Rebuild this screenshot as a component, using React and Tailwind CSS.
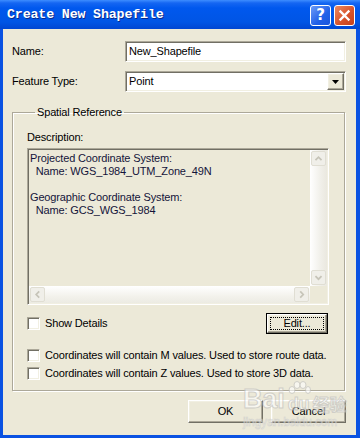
const raised =
  "border border-t-white border-l-white border-r-[#716F64] border-b-[#716F64] shadow-[inset_-1px_-1px_0_#ACA899,inset_1px_1px_0_#F1EFE2]";
const sunken =
  "border border-t-[#ACA899] border-l-[#ACA899] border-r-white border-b-white shadow-[inset_1px_1px_0_#716F64,inset_-1px_-1px_0_#F1EFE2]";

const Chevron = ({ dir }) => {
  const pts = {
    up: "4,9.5 7.5,6 11,9.5",
    down: "4,6 7.5,9.5 11,6",
    left: "9.5,4 6,7.5 9.5,11",
    right: "6,4 9.5,7.5 6,11",
  }[dir];
  return (
    <svg width="15" height="15" viewBox="0 0 15 15">
      <polyline points={pts} fill="none" stroke="#C6C4B8" strokeWidth="2" />
    </svg>
  );
};

const ScrollButton = ({ dir, className = "" }) => (
  <div className={`p-[1px] ${className}`}>
    <div className="w-[15px] h-[15px] rounded-[2px] border border-[#E0DED3] bg-[#F0EFE9] flex items-center justify-center">
      <Chevron dir={dir} />
    </div>
  </div>
);

const Checkbox = () => <div className={`w-[13px] h-[13px] shrink-0 bg-white ${sunken}`} />;

const CheckRow = ({ label, className = "" }) => (
  <div className={`flex items-center h-[13px] gap-[5px] ${className}`}>
    <Checkbox />
    <span className="leading-[13px]">{label}</span>
  </div>
);

const TitleBar = () => (
  <div className="h-[29px] flex pl-[7px] pr-[5px] bg-[linear-gradient(to_bottom,#3D8DFF_0px,#1566F2_3px,#0058EE_8px,#0055E5_22px,#0046D2_29px)]">
    <span className="flex-1 pt-[7px] font-['Liberation_Mono',monospace] font-bold text-[13.3px] leading-[15px] text-white [text-shadow:1px_1px_0_#0A2A8A]">
      Create New Shapefile
    </span>
    <div className="mt-[5px] w-[21px] h-[21px] rounded-[3px] border border-white bg-[linear-gradient(135deg,#6C9CF7,#2160E8_60%,#1A56DC)] flex items-center justify-center">
      <span className="font-['DejaVu_Sans',sans-serif] font-bold text-[15px] leading-none text-white">?</span>
    </div>
    <div className="ml-[3px] mt-[5px] w-[21px] h-[21px] rounded-[3px] border border-white bg-[linear-gradient(135deg,#EC8A62,#D8542C_55%,#C4401C)] flex items-center justify-center">
      <svg width="13" height="13" viewBox="0 0 13 13">
        <path d="M2.5 2.5 L10.5 10.5 M10.5 2.5 L2.5 10.5" stroke="white" strokeWidth="2.4" strokeLinecap="square" />
      </svg>
    </div>
  </div>
);

const Watermark = () => (
  <div className="absolute left-[243px] top-[381px] pointer-events-none select-none opacity-60">
    <div className="flex items-end text-white [-webkit-text-stroke:1px_#BDBDBD]">
      <span className="font-['Liberation_Sans',sans-serif] font-bold text-[27px] leading-none">Bai</span>
      <div className="flex flex-col items-center ml-[2px]">
        <svg width="24" height="14" viewBox="0 0 24 14">
          <g fill="white" stroke="#BDBDBD" strokeWidth="1">
            <ellipse cx="5" cy="9" rx="3" ry="3.5" />
            <ellipse cx="10" cy="4" rx="3" ry="3.5" />
            <ellipse cx="16" cy="4" rx="3" ry="3.5" />
            <ellipse cx="21" cy="9" rx="2.5" ry="3.5" />
          </g>
        </svg>
        <span className="font-['Liberation_Sans',sans-serif] font-bold text-[18px] leading-none">du</span>
      </div>
      <span className="ml-[2px] font-['Noto_Sans_CJK_SC',sans-serif] font-bold text-[17px] leading-none mb-[1px]">经验</span>
    </div>
    <div className="mt-[3px] font-['Liberation_Sans',sans-serif] text-[12px] leading-none text-white [-webkit-text-stroke:0.6px_#C4C4C4]">
      jingyan.baidu.com
    </div>
  </div>
);

export default function App() {
  return (
    <div className="relative w-[360px] h-[438px] flex flex-col bg-[#0A52E2] font-['Liberation_Sans',Arial,sans-serif] text-[11px] tracking-[-0.15px] text-black">
      <TitleBar />
      <div className="flex-1 flex flex-col ml-[3px] mr-[4px] mb-[3px] bg-[#ECE9D8] pl-[9px] pt-[12px]">
        <div className="flex items-center h-[21px]">
          <span className="w-[113px]">Name:</span>
          <div className={`w-[221px] h-[21px] bg-white flex items-center pl-[3px] ${sunken}`}>New_Shapefile</div>
        </div>
        <div className="flex items-center h-[21px] mt-[9px]">
          <span className="w-[113px]">Feature Type:</span>
          <div className={`w-[221px] h-[21px] bg-white flex items-center p-[1px] ${sunken}`}>
            <span className="flex-1 pl-[2px]">Point</span>
            <div className={`w-[17px] h-[17px] flex items-center justify-center bg-[#ECE9D8] ${raised}`}>
              <svg width="7" height="4" viewBox="0 0 7 4">
                <path d="M0 0 H7 L3.5 4 Z" fill="black" />
              </svg>
            </div>
          </div>
        </div>

        <fieldset className="mt-[14px] w-[333px] pl-[10px] pb-[10px] border border-[#ACA899] shadow-[inset_1px_1px_0_#fff,1px_1px_0_#fff]">
          <legend className="ml-[12px] px-[2px] h-[13px] leading-[13px]">Spatial Reference</legend>
          <div className="ml-[4px] w-[302px] flex flex-col">
            <div className="mt-[12px] h-[13px] leading-[13px]">Description:</div>
            <div className={`mt-[4px] h-[157px] grid grid-cols-[1fr_17px] grid-rows-[1fr_17px] bg-[#ECE9D8] ${sunken} p-[1px]`}>
              <div className="pl-[1px] pt-[2px] leading-[13px] whitespace-pre text-[#14143A] overflow-hidden">
                <div>Projected Coordinate System:</div>
                <div>{"  Name: WGS_1984_UTM_Zone_49N"}</div>
                <div className="h-[13px]" />
                <div>Geographic Coordinate System:</div>
                <div>{"  Name: GCS_WGS_1984"}</div>
              </div>
              <div className="flex flex-col bg-[linear-gradient(to_right,#FFFFFF,#F1F0EA_60%,#EAE8DF)]">
                <ScrollButton dir="up" />
                <div className="flex-1" />
                <ScrollButton dir="down" />
              </div>
              <div className="flex bg-[linear-gradient(to_bottom,#FFFFFF,#F3F2EC_60%,#ECEBE3)]">
                <ScrollButton dir="left" />
                <div className="flex-1" />
                <ScrollButton dir="right" />
              </div>
              <div className="bg-[#ECE9D8]" />
            </div>

            <div className="mt-[8px] h-[20px] flex items-center">
              <CheckRow label="Show Details" className="flex-1" />
              <div className="w-[62px] h-[21px] border border-black flex mr-[1px]">
                <div className={`flex-1 p-[2px] flex ${raised}`}>
                  <div className="flex-1 border border-dotted border-black flex items-center justify-center">Edit...</div>
                </div>
              </div>
            </div>
            <CheckRow className="mt-[16px]" label="Coordinates will contain M values. Used to store route data." />
            <CheckRow className="mt-[5px]" label="Coordinates will contain Z values. Used to store 3D data." />
          </div>
        </fieldset>

        <div className="mt-[9px] flex justify-end gap-[8px] pr-[10px]">
          <div className={`w-[75px] h-[23px] flex items-center justify-center ${raised}`}>OK</div>
          <div className={`w-[75px] h-[23px] flex items-center justify-center ${raised}`}>Cancel</div>
        </div>
      </div>
      <Watermark />
    </div>
  );
}
